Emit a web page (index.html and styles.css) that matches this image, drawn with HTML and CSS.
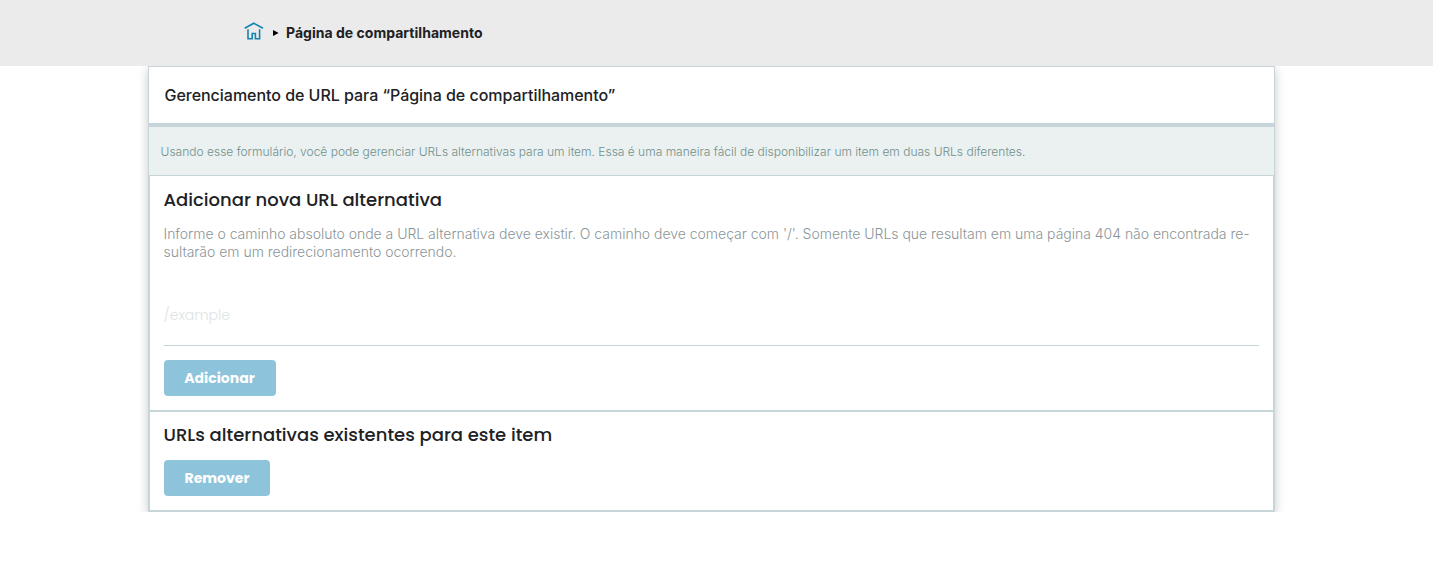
FILE: index.html
```html
<!DOCTYPE html>
<html lang="pt-BR">
<head>
<meta charset="utf-8">
<title>Gerenciamento de URL</title>
<link rel="stylesheet" href="styles.css">
</head>
<body>
<nav class="breadcrumbs">
  <a class="home" href="#" aria-label="Início"><svg width="20" height="18" viewBox="0 0 20 18" fill="none" stroke="#1683ae" stroke-width="1.6"><path d="M.7 6.2 9.8 1.2 19 6.2M4 7.2v9.5h4.2v-5.2h3.2v5.2h4.2V7.2"/></svg></a>
  <svg class="arrow" width="6" height="6" viewBox="0 0 6 6"><path d="M0 0 5.6 3 0 6z" fill="#000"/></svg>
  <span class="current">Página de compartilhamento</span>
</nav>
<main class="viewport">
  <div class="panel">
    <header class="title"><h1>Gerenciamento de URL para “Página de compartilhamento”</h1></header>
    <p class="notice"><span>Usando esse formulário, você pode gerenciar URLs alternativas para um item. Essa é uma maneira fácil de disponibilizar um item em duas URLs diferentes.</span></p>
    <section class="section add">
      <h2>Adicionar nova URL alternativa</h2>
      <p class="help">Informe o caminho absoluto onde a URL alternativa deve existir. O caminho deve começar com '/'. Somente URLs que resultam em uma página 404 não encontrada re-<br>sultarão em um redirecionamento ocorrendo.</p>
      <input class="path" type="text" placeholder="/example">
      <button class="button button-add">Adicionar</button>
    </section>
    <section class="section existing">
      <h2>URLs alternativas existentes para este item</h2>
      <button class="button button-remove">Remover</button>
    </section>
  </div>
</main>
</body>
</html>
```
FILE: styles.css
```css
* { box-sizing: border-box; }
body { margin: 0; background: #fff; color: #202124; font-family: Inter, sans-serif; }
h1, h2, p { margin: 0; }
.breadcrumbs { display: flex; align-items: center; height: 66px; padding-left: 244px; background: #ebebeb; }
.home { display: flex; width: 20px; margin: -4px 9px 0 0; }
.arrow { margin: -1px 7px 0 0; }
.current { margin-top: -2px; font-size: 14px; font-weight: 700; letter-spacing: .025px; white-space: nowrap; }
.viewport { height: 446px; padding: 0 158px 0 148px; overflow: hidden; }
.panel { height: 446px; border: 1px solid #c5d5d9; border-bottom: 0; box-shadow: 0 3px 10px rgba(0, 0, 0, .22); background: #fff; }
.title { display: flex; align-items: center; height: 60px; padding-left: 15.5px; border-bottom: 4px solid #c5d5d9; }
.title h1 { font-size: 16px; font-weight: 500; letter-spacing: -.03px; line-height: 20px; white-space: nowrap; }
.notice { display: flex; align-items: center; height: 48px; padding: 1px 0 0 11.6px; background: #ebf0f1; color: #6f918c; font-size: 12px; font-weight: 300; white-space: nowrap; }
.section { display: flex; flex-direction: column; align-items: flex-start; border: 1px solid #c5d5d9; padding: 0 14px; }
.add { height: 236px; }
.existing { height: 101px; border-bottom-width: 2px; }
h2 { margin-left: -.5px; font-family: Poppins, Inter, sans-serif; font-size: 18px; font-weight: 500; line-height: 24px; white-space: nowrap; }
.add h2 { margin-top: 12px; }
.existing h2 { margin-top: 11px; }
.help { margin: 13px 0 0 -.5px; font-size: 14px; font-weight: 300; letter-spacing: -.02px; line-height: 18px; color: #8b9599; white-space: nowrap; }
.path { width: 1095px; height: 62px; margin-top: 23px; padding: 2px 0 0; border: 0; border-bottom: 1px solid #c5d5d9; background: transparent; font: 300 14px/20px Poppins, Inter, sans-serif; text-indent: -.5px; }
.path::placeholder { color: #dce4e4; opacity: 1; }
.button { height: 36px; padding: 0; border: 0; border-radius: 4px; background: #8dc4dc; color: #fff; font: 700 14px/20px Poppins, Inter, sans-serif; }
.button-add { width: 112px; margin-top: 14px; padding-right: 1px; }
.button-remove { width: 106px; margin-top: 13px; }
```
